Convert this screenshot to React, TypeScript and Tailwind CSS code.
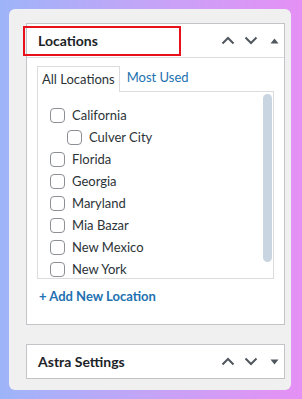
const locations = [
  { name: 'California', child: false },
  { name: 'Culver City', child: true },
  { name: 'Florida', child: false },
  { name: 'Georgia', child: false },
  { name: 'Maryland', child: false },
  { name: 'Mia Bazar', child: false },
  { name: 'New Mexico', child: false },
  { name: 'New York', child: false },
];

function Chevron({ up }: { up?: boolean }) {
  return (
    <svg width="14" height="9" viewBox="0 0 14 9" fill="none">
      <path
        d={up ? 'M1.5 7.5 L7 2 L12.5 7.5' : 'M1.5 1.5 L7 7 L12.5 1.5'}
        stroke="#50575e"
        strokeWidth="2"
      />
    </svg>
  );
}

function Triangle({ up }: { up?: boolean }) {
  return (
    <svg width="9" height="6" viewBox="0 0 9 6">
      <path d={up ? 'M0.5 5.5 L4.5 0.5 L8.5 5.5 Z' : 'M0.5 0.5 L4.5 5.5 L8.5 0.5 Z'} fill="#50575e" />
    </svg>
  );
}

function HeaderControls({ open }: { open?: boolean }) {
  return (
    <div className="flex items-center gap-[9px] pr-[3px]">
      <Chevron up />
      <Chevron />
      <div className="w-[14px] flex justify-center">
        <Triangle up={open} />
      </div>
    </div>
  );
}

export default function App() {
  return (
    <div
      className="w-[302px] h-[399px] bg-gradient-to-r from-[#9db4f9] to-[#e590f5] pt-[9px] pl-[9px] pr-[11px] pb-[9px]"
      style={{ fontFamily: 'Lato, "Noto Sans", sans-serif' }}
    >
      <div className="h-full bg-[#f0f0f1] rounded-md pt-[14px] pl-[17px] pr-[6px]">
        {/* Locations box */}
        <div className="bg-white border border-[#c3c4c7] h-[302px] flex flex-col">
          <div className="h-[34px] shrink-0 flex items-center justify-between border-b border-[#dcdcde] relative">
            <div className="absolute left-[-4px] top-[2px] w-[158px] h-[30px] border-2 border-[#e8101a]" />
            <span className="pl-[11px] text-[14px] font-bold text-[#1d2327]">Locations</span>
            <HeaderControls open />
          </div>
          <div className="px-[10px] pt-[7px]">
            <div className="flex items-end">
              <div className="h-[26px] px-[4px] border border-b-0 border-[#dcdcde] bg-white text-[13px] text-[#2c3338] flex items-center relative top-[1px] z-10">
                All Locations
              </div>
              <div className="h-[26px] px-[7px] text-[13px] text-[#2271b1] flex items-center">Most Used</div>
            </div>
            <div className="relative h-[188px] border border-[#dcdcde] bg-white pt-[16px] pl-[12px]">
              <div className="flex flex-col gap-[7px]">
                {locations.map(loc => (
                  <label
                    key={loc.name}
                    className={`flex items-center gap-[7px] h-[15px] text-[13px] text-[#2c3338] ${loc.child ? 'pl-[17px]' : ''}`}
                  >
                    <span className="w-[15px] h-[15px] rounded-[4px] border border-[#8c8f94] bg-white shrink-0" />
                    <span>{loc.name}</span>
                  </label>
                ))}
              </div>
              <div className="absolute top-[2px] right-[1px] w-[9px] h-[168px] rounded-full bg-[#c9d5e0]" />
            </div>
            <div className="pt-[8px] pl-[2px] text-[13px] font-bold text-[#2271b1]">+ Add New Location</div>
          </div>
        </div>
        {/* Astra Settings box */}
        <div className="mt-[19px] bg-white border border-[#c3c4c7] h-[35px] flex items-center justify-between">
          <span className="pl-[11px] text-[14px] font-bold text-[#1d2327]">Astra Settings</span>
          <HeaderControls />
        </div>
      </div>
    </div>
  );
}
